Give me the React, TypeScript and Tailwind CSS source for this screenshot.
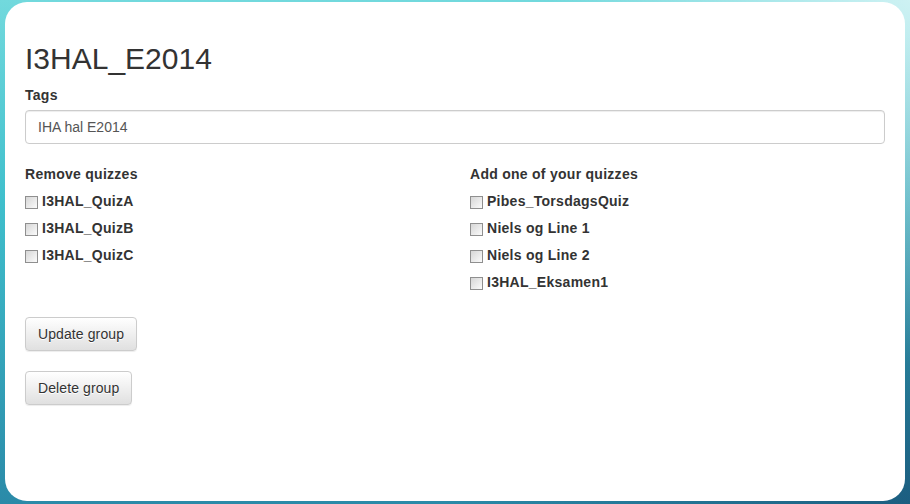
import React from "react";

const removeQuizzes = ["I3HAL_QuizA", "I3HAL_QuizB", "I3HAL_QuizC"];
const addQuizzes = ["Pibes_TorsdagsQuiz", "Niels og Line 1", "Niels og Line 2", "I3HAL_Eksamen1"];

const Check = ({ label }: { label: string }) => (
  <label className="flex items-start h-5 text-[14px] leading-5 font-bold tracking-[0.27px] text-[#333]">
    <span className="mt-[5px] mr-[4px] w-[13px] h-[13px] shrink-0 border border-[#8f8f8f] bg-gradient-to-br from-[#d6d6d6] to-[#fbfbfb]" />
    {label}
  </label>
);

const QuizList = ({ title, items }: { title: string; items: string[] }) => (
  <div className="flex flex-col">
    <div className="text-[14px] leading-5 font-bold tracking-[0.27px] text-[#333] mb-[7px]">{title}</div>
    <div className="flex flex-col gap-[7px]">
      {items.map((q) => (
        <Check key={q} label={q} />
      ))}
    </div>
  </div>
);

const Btn = ({ label }: { label: string }) => (
  <button
    type="button"
    className="h-[34px] px-3 text-[14px] tracking-[0.1px] text-[#333] border border-[#ccc] rounded-[4px] bg-gradient-to-b from-white to-[#e0e0e0] shadow-[inset_0_1px_0_rgba(255,255,255,0.15),0_1px_1px_rgba(0,0,0,0.075)] [text-shadow:0_1px_0_#fff]"
  >
    {label}
  </button>
);

export default function App() {
  return (
    <div
      className="w-[910px] h-[504px] pt-[2px] pl-[5px] bg-[radial-gradient(circle_at_100%_0%,rgba(255,255,255,0.65),transparent_35%),radial-gradient(circle_at_100%_100%,rgba(10,40,80,0.45),transparent_45%),linear-gradient(180deg,#72d9dd_0%,#3fbfcc_40%,#2a8aa8_100%)]"
      style={{ fontFamily: '"Liberation Sans", Arial, Helvetica, sans-serif' }}
    >
      <div className="w-[900px] h-[499px] bg-white rounded-[22px] px-5 pt-10">
        <h2 className="text-[30px] leading-[33px] text-[#333] mb-[10px]">I3HAL_E2014</h2>

        <div className="text-[14px] leading-5 font-bold tracking-[0.27px] text-[#333] mb-[5px]">Tags</div>
        <input
          defaultValue="IHA hal E2014"
          className="block w-full h-[34px] px-3 text-[14px] text-[#555] border border-[#ccc] rounded-[4px] shadow-[inset_0_1px_1px_rgba(0,0,0,0.075)] outline-none"
        />

        <div className="grid grid-cols-2 gap-x-[30px] mt-5">
          <QuizList title="Remove quizzes" items={removeQuizzes} />
          <QuizList title="Add one of your quizzes" items={addQuizzes} />
        </div>

        <div className="flex flex-col items-start gap-5 mt-[25px]">
          <Btn label="Update group" />
          <Btn label="Delete group" />
        </div>
      </div>
    </div>
  );
}
